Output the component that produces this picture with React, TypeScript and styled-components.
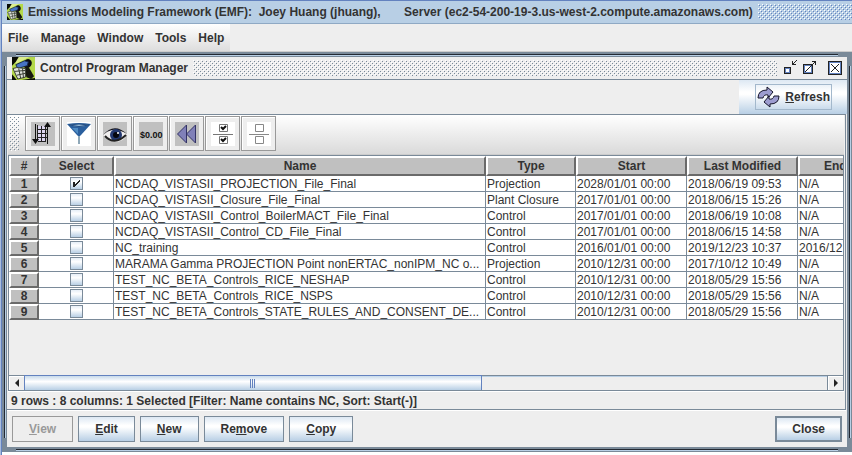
import React from "react";
import styled, { createGlobalStyle, css } from "styled-components";

const steel = "#7a8a99";
const blue = "#6382bf";
const face = "#eeeeee";
const metal = "linear-gradient(#dde8f3 0%, #ffffff 35%, #ffffff 42%, #b8cfe5 100%)";

const GlobalStyle = createGlobalStyle`
  * { box-sizing: border-box; }
  html, body, #root { height: 100%; }
  body {
    margin: 0;
    overflow: hidden;
    background: #ffffff;
    color: #333333;
    font: bold 12px/16px "Liberation Sans", Arial, sans-serif;
  }
  button, input { font: inherit; color: inherit; margin: 0; }
`;

const Window = styled.div`
  display: flex;
  flex-direction: column;
  height: 100%;
  padding-left: 1px;
  background: ${blue};
  border-top: 1px solid ${blue};
  border-left: 1px solid #a9bdde;
`;

const TitleBar = styled.header`
  display: flex;
  align-items: center;
  gap: 5px;
  height: 23px;
  flex: none;
  padding-left: 5px;
  background: #b8cfe5;
  border-bottom: 1px solid #8fa9c4;
`;

const TitleText = styled.h1`
  margin: 0;
  font: inherit;
  white-space: pre;
`;

const dot = (color: string) =>
  `conic-gradient(from 90deg at 3px 3px, ${color} 25%, transparent 0)`;

const Bumps = styled.div<{ $color?: string; $vertical?: boolean }>`
  flex: ${(p) => (p.$vertical ? "0 0 10px" : "1")};
  height: ${(p) => (p.$vertical ? "auto" : "16px")};
  background-image: ${({ $color = "#7a8a99" }) =>
    [dot($color), dot($color), dot("#ffffff"), dot("#ffffff")].join(", ")};
  background-size: 4px 4px;
  background-position: 0 0, 2px 2px, 1px 1px, 3px 3px;
`;

const MenuBar = styled.nav`
  display: flex;
  flex: none;
  height: 28px;
  background: ${face};
  border-bottom: 1px solid #cccccc;
`;

const MenuGroup = styled.div`
  display: flex;
  align-items: center;
  gap: 12px;
  padding: 0 6px;
  background: linear-gradient(#ffffff, #dddddd);
`;

const MenuButton = styled.button`
  border: 0;
  padding: 0;
  background: none;
`;

const Desktop = styled.main`
  display: flex;
  flex: 1;
  min-height: 0;
  padding-bottom: 3px;
  background: #ffffff;
`;

const FrameEdge = styled.div`
  display: flex;
  flex: 1;
  min-width: 0;
  padding: 5px;
  background-color: ${steel};
  background-image: linear-gradient(#222831, #222831), linear-gradient(#b8cfe5, #b8cfe5),
    linear-gradient(#222831, #222831), linear-gradient(#b8cfe5, #b8cfe5),
    linear-gradient(#222831, #222831), linear-gradient(#b8cfe5, #b8cfe5),
    linear-gradient(#222831, #222831), linear-gradient(#b8cfe5, #b8cfe5);
  background-repeat: no-repeat;
  background-size: calc(100% - 28px) 1px, calc(100% - 28px) 1px, calc(100% - 28px) 1px,
    calc(100% - 28px) 1px, 1px calc(100% - 28px), 1px calc(100% - 28px), 1px calc(100% - 28px),
    1px calc(100% - 28px);
  background-position: center top 2px, center top 3px, center bottom 2px, center bottom 1px,
    left 2px center, left 3px center, right 2px center, right 1px center;
`;

const Frame = styled.section`
  display: flex;
  flex-direction: column;
  flex: 1;
  min-width: 0;
  background: ${face};
`;

const FrameTitle = styled.header`
  display: flex;
  align-items: center;
  gap: 5px;
  flex: none;
  height: 23px;
  padding: 0 4px 0 5px;
  border-bottom: 1px solid ${steel};
`;

const FrameControls = styled.div`
  display: flex;
  align-items: center;
  gap: 4px;
`;

const ControlButton = styled.button`
  display: flex;
  padding: 0;
  border: 0;
  background: none;
  &:last-child { margin-left: 6px; }
`;

const RefreshRow = styled.div`
  display: flex;
  justify-content: flex-end;
  flex: none;
`;

const RefreshButton = styled.button`
  display: flex;
  padding: 4px 15px 4px 16px;
  border: 0;
  background: ${metal};
`;

const RefreshFocus = styled.span`
  display: flex;
  align-items: center;
  gap: 5px;
  height: 26px;
  padding: 0 1px;
  border: 1px solid #a3b8cc;
`;

const Panel = styled.div`
  display: flex;
  flex-direction: column;
  flex: 1;
  min-height: 0;
  margin-right: 1px;
  padding: 0 1px;
  border: 1px solid ${steel};
  border-left: 0;
  box-shadow: 0 1px #ffffff;
`;

const ToolBar = styled.div`
  display: flex;
  flex: none;
  gap: 1px;
  height: 40px;
  padding: 1px 0 3px 1px;
  border-bottom: 1px solid #cccccc;
  background: linear-gradient(#ffffff, #dadada);
`;

const ToolGrip = styled(Bumps)`
  margin-right: 5px;
`;

const ToolButton = styled.button`
  display: flex;
  align-items: center;
  justify-content: center;
  width: 35px;
  height: 35px;
  padding: 0;
  border: 1px solid #999999;
  background: ${face};
  box-shadow: inset 1px 1px #ffffff;
`;

const TableArea = styled.div`
  flex: 1;
  min-height: 0;
  overflow: hidden;
  border: 1px solid ${steel};
  border-bottom: 0;
`;

const Table = styled.table`
  table-layout: fixed;
  width: 900px;
  border-collapse: separate;
  border-spacing: 0;
`;

const raised = css`
  background: #c0c0c0;
  border: 2px solid;
  border-color: #ffffff #6a6a6a #6a6a6a #ffffff;
  text-align: center;
  font-weight: bold;
`;

const HeadCell = styled.th`
  ${raised}
  height: 20px;
  padding: 0;
  line-height: 16px;
  &:last-child {
    padding-left: 24px;
    text-align: left;
  }
`;

const RowHead = styled.th`
  ${raised}
  height: 16px;
  padding: 0;
  line-height: 12px;
`;

const Cell = styled.td<{ $center?: boolean }>`
  height: 16px;
  padding: ${(p) => (p.$center ? "0" : "2px 0 0 1px")};
  overflow: hidden;
  border-right: 1px solid ${steel};
  border-bottom: 1px solid ${steel};
  background: #ffffff;
  font-weight: normal;
  line-height: 13px;
  text-overflow: ellipsis;
  white-space: nowrap;
`;

const Tick = styled.input`
  appearance: none;
  display: block;
  width: 13px;
  height: 13px;
  margin: 0 auto;
  border: 1px solid ${steel};
  background: linear-gradient(#e6eef7, #ffffff 35%, #b8cfe5);
  &:checked {
    background: url("data:image/svg+xml,%3Csvg xmlns='http://www.w3.org/2000/svg' viewBox='0 0 11 11' shape-rendering='crispEdges'%3E%3Cpath d='M2 4h2v2h1V5h1V4h1V3h1V2h1v2H8v1H7v1H6v1H5v1H4v1H2z' fill='%23222'/%3E%3C/svg%3E"),
      linear-gradient(#e6eef7, #ffffff 35%, #b8cfe5);
  }
`;

const ScrollBar = styled.div`
  display: flex;
  flex: none;
  height: 16px;
  border: 1px solid ${steel};
  box-shadow: 0 1px #ffffff;
`;

const ScrollArrow = styled.button`
  display: flex;
  align-items: center;
  justify-content: center;
  width: 15px;
  padding: 0;
  border: 0;
  background: ${face};
  box-shadow: inset 1px 1px #ffffff;
`;

const ScrollTrack = styled.div`
  flex: 1;
  border-right: 1px solid ${steel};
  box-shadow: inset 0 1px #b8cfe5;
`;

const ScrollThumb = styled.div`
  display: flex;
  align-items: center;
  justify-content: center;
  width: 57%;
  height: 15px;
  margin-top: -1px;
  border: 1px solid ${blue};
  border-bottom: 0;
  background: linear-gradient(#c8daeb, #ffffff 40%, #b8cfe5);
`;

const Status = styled.div`
  flex: none;
  height: 18px;
  padding: 2px 0 0 3px;
`;

const Actions = styled.footer`
  display: flex;
  flex: none;
  gap: 5px;
  padding: 6px 5px 5px;
`;

const ActionButton = styled.button<{ $primary?: boolean }>`
  height: 26px;
  padding: 0 ${(p) => (p.$primary ? 15 : 16)}px;
  border: ${(p) => (p.$primary ? 2 : 1)}px solid ${steel};
  background: ${metal};
  &:last-child { margin-left: auto; }
  &:disabled {
    border-color: #999999;
    background: ${face};
    color: #999999;
  }
`;

const AppIcon = ({ size }: { size: number }) => (
  <svg width={size} height={size} viewBox="0 0 24 24" aria-hidden="true">
    <rect width="24" height="24" fill="#b4d84a" />
    <path d="M4 0h14l-6 3-8 4z" fill="#dcec8c" />
    <path d="M0 0h7L4 5 0 9z" fill="#0a0d06" />
    <path d="M0 18l5 6H0zM10 24l14-2v2z" fill="#0a0d06" />
    <path d="M13 4q4-4 7 0 2 4-2 7l-5 1 1-3z" fill="#0b0b12" />
    <path d="M4 8l9-4 4 1-1 4-10 3z" fill="#4773c4" stroke="#16264d" />
    <path d="M13 10h4l6 10-3 3-5-2z" fill="#16180f" />
    <path d="M1 12l4-1 9 1v9l-8 2z" fill="#dfe3dc" stroke="#33382e" />
    <path d="M3 15l11-1M5 19l9-2M7 12l2 10M11 12l1 10" stroke="#33382e" fill="none" />
  </svg>
);

const MinimizeIcon = () => (
  <svg width="15" height="16" shapeRendering="crispEdges" aria-hidden="true">
    <path d="M2 7h7v7H2z" fill="#222" />
    <path d="M3 8h5v5H3z" fill={blue} />
    <path d="M4 9h3v3H4z" fill="#fff" />
    <path d="M10 1h1v3h3v1h-4zM11 3h1v1h-1zM12 2h1v1h-1zM13 1h1v1h-1zM14 0h1v1h-1z" fill="#222" />
  </svg>
);

const MaximizeIcon = () => (
  <svg width="16" height="16" shapeRendering="crispEdges" aria-hidden="true">
    <path d="M2 4h10v10H2z" fill="#222" />
    <path d="M3 5h8v8H3z" fill={blue} />
    <path d="M4 6h6v6H4z" fill="#fff" />
    <path d="M4 11h1v1H4zM5 10h1v1H5zM6 9h1v1H6zM7 8h1v1H7zM8 7h1v1H8zM9 6h1v1H9zM10 5h1v1h-1zM11 4h1v1h-1zM12 3h1v1h-1zM13 2h1v1h-1zM11 1h4v4h-1V2h-3z" fill="#222" />
  </svg>
);

const CloseIcon = () => (
  <svg width="16" height="16" shapeRendering="crispEdges" aria-hidden="true">
    <path d="M1 1h14v14H1z" fill="#222" />
    <path d="M2 2h12v12H2z" fill={blue} />
    <path d="M3 3h10v10H3z" fill="#fff" />
    <path d="M4 4l8 8M12 4l-8 8" stroke="#222" />
  </svg>
);

const RefreshIcon = () => (
  <svg width="23" height="22" viewBox="0 0 23 22" aria-hidden="true">
    <g fill="#9c9cd0" stroke="#15152a" strokeLinejoin="round">
      <path d="M1 12Q1 4 10 4V1l6 5-5 6V9Q7 8 6 12z" />
      <path d="M1 12Q1 4 10 4V1l6 5-5 6V9Q7 8 6 12z" transform="rotate(180 11.500 11)" />
    </g>
  </svg>
);

const tools = [
  {
    label: "Sort columns",
    icon: (
      <svg width="24" height="24" aria-hidden="true">
        <path d="M0 0h24v24H0z" fill="#c0c0c0" />
        <path d="M6 4h9v15H6z" fill="#ddd6ef" />
        <path d="M6.500 3v16M10.500 4v16M14.500 4v16M6 7.500h10M6 11.500h10M6 15.500h10M7 19.500h8" stroke="#222" fill="none" />
        <path d="M4.500 2v18M16.500 5v17" stroke="#111" />
        <path d="M1 17h7l-3.500 5zM13 5h7l-3.500-5z" fill="#111" />
      </svg>
    ),
  },
  {
    label: "Filter",
    icon: (
      <svg width="24" height="24" aria-hidden="true">
        <path d="M0 0h24v24H0z" fill="#fff" />
        <path d="M0 2q12-2 24 0l-10 11-2 2-2-2z" fill="#2a5f9e" />
        <path d="M2 3q10 3 20 0-10-2-20 0z" fill="#9cc0dc" stroke="#234e84" />
        <path d="M11 14h2v8h-2z" fill="#8fa8b8" />
        <path d="M5 6l6 6V6z" fill="#4f8cc4" />
      </svg>
    ),
  },
  {
    label: "View",
    icon: (
      <svg width="24" height="24" aria-hidden="true">
        <path d="M0 0h24v24H0z" fill="#c0c0c0" />
        <path d="M0 13Q9 2 24 12q-3 8-12 8Q5 20 0 13z" fill="#f0eeee" />
        <path d="M0 13Q11 0 24 12 15 7 9 8q-5 1-9 5z" fill="#14141c" />
        <circle cx="13" cy="13" r="6" fill="#22386f" />
        <circle cx="13" cy="13" r="3" fill="#05070f" />
        <circle cx="15" cy="11" r="1" fill="#fff" />
        <path d="M2 14q9 10 21-1" fill="none" stroke="#222" strokeWidth="2" />
      </svg>
    ),
  },
  {
    label: "Format",
    icon: (
      <svg width="24" height="24" aria-hidden="true">
        <path d="M0 0h24v24H0z" fill="#c0c0c0" />
        <text x="1" y="16" textAnchor="start" fontSize="9" fill="#111">$0.00</text>
      </svg>
    ),
  },
  {
    label: "Reset",
    icon: (
      <svg width="24" height="24" aria-hidden="true">
        <path d="M0 0h24v24H0z" fill="#c0c0c0" />
        <path d="M11.500 3v18l-9-9zM20.500 3v18l-9-9z" fill="#8080b8" stroke="#333366" />
      </svg>
    ),
  },
  {
    label: "Select all",
    icon: (
      <svg width="24" height="24" aria-hidden="true">
        <path d="M0 0h24v24H0z" fill="#fff" />
        <path d="M8.500 2.500h8v7h-8zM8.500 14.500h8v7h-8zM2 12.500h20" fill="none" stroke="#777" />
        <path d="M10 5l2 2 3-3M10 17l2 2 3-3" fill="none" stroke="#111" strokeWidth="2" />
      </svg>
    ),
  },
  {
    label: "Clear selection",
    icon: (
      <svg width="24" height="24" aria-hidden="true">
        <path d="M0 0h24v24H0z" fill="#fff" />
        <path d="M8.500 2.500h8v7h-8zM8.500 14.500h8v7h-8zM2 12.500h20" fill="none" stroke="#888" />
      </svg>
    ),
  },
];

const rows = [
  ["NCDAQ_VISTASII_PROJECTION_File_Final", "Projection", "2028/01/01 00:00", "2018/06/19 09:53", "N/A"],
  ["NCDAQ_VISTASII_Closure_File_Final", "Plant Closure", "2017/01/01 00:00", "2018/06/15 15:26", "N/A"],
  ["NCDAQ_VISTASII_Control_BoilerMACT_File_Final", "Control", "2017/01/01 00:00", "2018/06/19 10:08", "N/A"],
  ["NCDAQ_VISTASII_Control_CD_File_Final", "Control", "2017/01/01 00:00", "2018/06/15 14:58", "N/A"],
  ["NC_training", "Control", "2016/01/01 00:00", "2019/12/23 10:37", "2016/12"],
  ["MARAMA Gamma PROJECTION Point nonERTAC_nonIPM_NC o...", "Projection", "2010/12/31 00:00", "2017/10/12 10:49", "N/A"],
  ["TEST_NC_BETA_Controls_RICE_NESHAP", "Control", "2010/12/31 00:00", "2018/05/29 15:56", "N/A"],
  ["TEST_NC_BETA_Controls_RICE_NSPS", "Control", "2010/12/31 00:00", "2018/05/29 15:56", "N/A"],
  ["TEST_NC_BETA_Controls_STATE_RULES_AND_CONSENT_DE...", "Control", "2010/12/31 00:00", "2018/05/29 15:56", "N/A"],
];

const columns: [string, number][] = [
  ["#", 30],
  ["Select", 75],
  ["Name", 372],
  ["Type", 90],
  ["Start", 111],
  ["Last Modified", 111],
  ["End", 111],
];

export default function App() {
  return (
    <>
      <GlobalStyle />
      <Window>
        <TitleBar>
          <AppIcon size={16} />
          <TitleText>{"Emissions Modeling Framework (EMF):  Joey Huang (jhuang),       Server (ec2-54-200-19-3.us-west-2.compute.amazonaws.com)"}</TitleText>
          <Bumps $color={blue} />
        </TitleBar>
        <MenuBar>
          <MenuGroup>
            {["File", "Manage", "Window", "Tools", "Help"].map((m) => (
              <MenuButton key={m}>{m}</MenuButton>
            ))}
          </MenuGroup>
        </MenuBar>
        <Desktop>
          <FrameEdge>
            <Frame>
              <FrameTitle>
                <AppIcon size={23} />
                <TitleText as="h2">Control Program Manager</TitleText>
                <Bumps />
                <FrameControls>
                  <ControlButton aria-label="Minimize"><MinimizeIcon /></ControlButton>
                  <ControlButton aria-label="Maximize"><MaximizeIcon /></ControlButton>
                  <ControlButton aria-label="Close window"><CloseIcon /></ControlButton>
                </FrameControls>
              </FrameTitle>
              <RefreshRow>
                <RefreshButton>
                  <RefreshFocus>
                    <RefreshIcon />
                    <span><u>R</u>efresh</span>
                  </RefreshFocus>
                </RefreshButton>
              </RefreshRow>
              <Panel>
                <ToolBar>
                  <ToolGrip $vertical />
                  {tools.map((t) => (
                    <ToolButton key={t.label} aria-label={t.label}>{t.icon}</ToolButton>
                  ))}
                </ToolBar>
                <TableArea>
                  <Table>
                    <colgroup>
                      {columns.map(([name, width]) => <col key={name} width={width} />)}
                    </colgroup>
                    <thead>
                      <tr>{columns.map(([name]) => <HeadCell key={name}>{name}</HeadCell>)}</tr>
                    </thead>
                    <tbody>
                      {rows.map((r, i) => (
                        <tr key={r[0]}>
                          <RowHead>{i + 1}</RowHead>
                          <Cell $center>
                            <Tick type="checkbox" defaultChecked={i === 0} aria-label={`Select ${r[0]}`} />
                          </Cell>
                          {r.map((v, j) => <Cell key={j}>{v}</Cell>)}
                        </tr>
                      ))}
                    </tbody>
                  </Table>
                </TableArea>
                <ScrollBar>
                  <ScrollArrow aria-label="Scroll left">
                    <svg width="6" height="8"><path d="M5 0v8L1 4z" fill="#222" /></svg>
                  </ScrollArrow>
                  <ScrollTrack>
                    <ScrollThumb>
                      <svg width="6" height="9"><path d="M.5 0v9M2.500 0v9M4.500 0v9" stroke={blue} /></svg>
                    </ScrollThumb>
                  </ScrollTrack>
                  <ScrollArrow aria-label="Scroll right">
                    <svg width="6" height="8"><path d="M1 0v8l4-4z" fill="#222" /></svg>
                  </ScrollArrow>
                </ScrollBar>
                <Status>9 rows : 8 columns: 1 Selected [Filter: Name contains NC, Sort: Start(-)]</Status>
              </Panel>
              <Actions>
                <ActionButton disabled><u>V</u>iew</ActionButton>
                <ActionButton><u>E</u>dit</ActionButton>
                <ActionButton><u>N</u>ew</ActionButton>
                <ActionButton>Re<u>m</u>ove</ActionButton>
                <ActionButton><u>C</u>opy</ActionButton>
                <ActionButton $primary>Close</ActionButton>
              </Actions>
            </Frame>
          </FrameEdge>
        </Desktop>
      </Window>
    </>
  );
}
